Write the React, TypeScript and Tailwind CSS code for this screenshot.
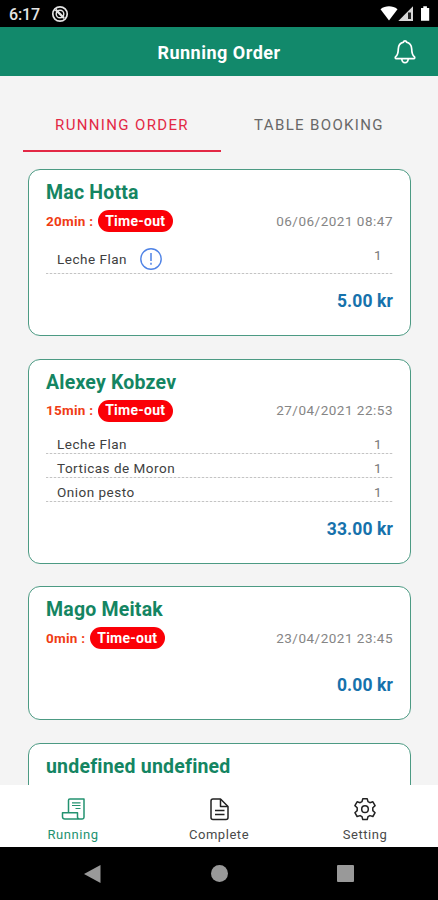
import React from "react";

type Item = { name: string; qty: number; alert?: boolean };
type Order = { name: string; wait?: string; date?: string; items: Item[]; total?: string };

const orders: Order[] = [
  {
    name: "Mac Hotta",
    wait: "20min :",
    date: "06/06/2021 08:47",
    items: [{ name: "Leche Flan", qty: 1, alert: true }],
    total: "5.00 kr",
  },
  {
    name: "Alexey Kobzev",
    wait: "15min :",
    date: "27/04/2021 22:53",
    items: [
      { name: "Leche Flan", qty: 1 },
      { name: "Torticas de Moron", qty: 1 },
      { name: "Onion pesto", qty: 1 },
    ],
    total: "33.00 kr",
  },
  { name: "Mago Meitak", wait: "0min :", date: "23/04/2021 23:45", items: [], total: "0.00 kr" },
  { name: "undefined undefined", items: [] },
];

function StatusBar() {
  return (
    <div className="flex h-[27px] shrink-0 items-center bg-black pl-[9px] pr-[8px] text-[#e4e4e4]">
      <span className="w-[42px] pt-[2px] text-[16px] font-medium leading-none tracking-[-0.100px]">6:17</span>
      <svg width="18" height="18" viewBox="0 0 18 18" fill="none" stroke="currentColor">
        <circle cx="9" cy="9" r="7.2" strokeWidth="1.7" />
        <circle cx="9" cy="9" r="3.8" strokeWidth="1.4" />
        <path d="M4.600 4.600l8.500 8.500" strokeWidth="2.200" />
      </svg>
      <div className="flex-1" />
      <svg width="50" height="17" viewBox="0 0 50 17">
        <path d="M0.500 4.200C5.500 0.400 12.500 0.400 17.500 4.200L9 15.500z" fill="#fff" />
        <path d="M33 1.300V16H18.300z" fill="#d8d8d8" />
        <path d="M28 7.500h3v6.500h-3z" fill="#222" />
        <path d="M41 3h2.300V1.200h3.600V3h2.300v12.800H41z" fill="#fff" />
      </svg>
    </div>
  );
}

function BellIcon() {
  return (
    <svg width="22" height="26" viewBox="0 0 22 26" fill="none" stroke="#fff" strokeWidth="1.700" strokeLinejoin="round">
      <path d="M11 1.800c-.9 0-1.400.6-1.400 1.300C6.300 3.900 4.400 6.400 4.300 10c-.1 4.600-.8 6.300-2.600 7.700-.8.700-.5 1.900.6 1.900h17.400c1.100 0 1.400-1.200.6-1.900-1.800-1.400-2.500-3.100-2.600-7.700-.1-3.600-2-6.100-5.300-6.900 0-.7-.5-1.300-1.400-1.300z" />
      <path d="M7.800 20c.2 2.400 1.500 3.700 3.200 3.700s3-1.300 3.200-3.700" />
    </svg>
  );
}

function OrderCard({ order }: { order: Order }) {
  return (
    <article className="min-h-[134px] shrink-0 rounded-[12px] border border-[#4c9a83] bg-white px-[17px] pb-[22px] pt-[11px]">
      <h2 className="h-[24px] text-[19.500px] font-bold leading-[24px] tracking-[0.200px] text-[#148562]">{order.name}</h2>
      {order.date && (
        <>
          <div className="mt-[5px] flex h-[22px] items-center">
            <span className="text-[13.500px] font-bold tracking-[0.250px] text-[#f03c14]">{order.wait}</span>
            <span className="ml-[4.500px] flex h-[22px] w-[75px] items-center justify-center rounded-full bg-[#fb0007] text-[14px] font-bold tracking-[0.250px] text-white">
              Time-out
            </span>
            <span className="ml-auto text-[13.500px] tracking-[0.500px] text-[#858585]">{order.date}</span>
          </div>
          <ul className="min-h-[9px] pt-[8px]">
            {order.items.map((item) => (
              <li key={item.name} className={item.alert ? "flex h-[34px] flex-col" : "flex h-[24px] flex-col"}>
                <div className="flex flex-1 items-center pl-[11px] pr-[11px] text-[13.500px] leading-[18px] tracking-[0.500px]">
                  <span className={item.alert ? "pt-[5px] text-[#404040]" : "pt-[5px] text-[#404040]"}>{item.name}</span>
                  {item.alert && (
                    <svg className="ml-[12px] mt-[5px]" width="24" height="24" viewBox="0 0 24 24" fill="none" stroke="#4f83e6">
                      <circle cx="12" cy="12" r="10.200" strokeWidth="1.400" />
                      <path d="M12 6v8M12 15.800v2" strokeWidth="1.500" />
                    </svg>
                  )}
                  <span className={item.alert ? "mb-[3px] ml-auto text-[#777]" : "ml-auto pt-[5px] text-[#777]"}>{item.qty}</span>
                </div>
                <div className="h-px shrink-0 bg-[repeating-linear-gradient(90deg,#c4c4c4_0_2px,#f0f0f0_2px_4px)]" />
              </li>
            ))}
          </ul>
          <p className="mt-[15px] h-[24px] text-right text-[17.500px] font-bold leading-[24px] tracking-[0.100px] text-[#1672ac]">{order.total}</p>
        </>
      )}
    </article>
  );
}

function RunningIcon() {
  return (
    <svg width="24" height="24" viewBox="0 0 24 24" fill="none" stroke="currentColor" strokeWidth="1.500" strokeLinejoin="round">
      <path d="M7.500 15V3.300q0-1.300 1.300-1.300H23V20.300q0 1.700-1.700 1.700H4Q1.500 22 1.500 19.700v-4h15V20q0 2 2.200 2" />
      <path d="M11 5.800h8.500M11 8.500h8.500M14.500 11.500h5" strokeWidth="1.200" />
    </svg>
  );
}

function CompleteIcon() {
  return (
    <svg width="24" height="24" viewBox="0 0 24 24" fill="none" stroke="currentColor" strokeWidth="1.500" strokeLinejoin="round">
      <path d="M13.500 2H6Q4 2 4 4V20.500q0 2 2 2h13q2 0 2-2V9.500z" />
      <path d="M13.500 2V9.500H21M8 13.500h9.500M8 17.500h9.500" />
    </svg>
  );
}

function SettingIcon() {
  return (
    <svg width="24" height="24" viewBox="0 0 24 24" fill="none" stroke="currentColor" strokeWidth="1.500" strokeLinejoin="round">
      <path d="M9.800 1.700h4.400l.8 2.900 1.900 1.100 3-.9 2.200 3.800-2.300 2.100v2.900l2.300 2.100-2.200 3.800-3-.9-1.900 1.100-.8 2.900H9.800L9 19.700l-1.900-1.100-3 .9-2.200-3.800 2.300-2.100v-2.900L1.900 8.600 4.100 4.800l3 .9L9 4.600z" />
      <circle cx="12" cy="12.150" r="3.300" />
    </svg>
  );
}

const destinations = [
  { label: "Running", Icon: RunningIcon, icon: "text-[#239270]", text: "text-[#239270]" },
  { label: "Complete", Icon: CompleteIcon, icon: "text-[#222]", text: "text-[#4a4a4a]" },
  { label: "Setting", Icon: SettingIcon, icon: "text-[#222]", text: "text-[#4a4a4a]" },
];

export default function App() {
  return (
    <div className="flex h-[900px] w-[438px] flex-col overflow-hidden bg-[#f4f4f4] font-['Roboto',sans-serif]">
      <StatusBar />
      <header className="grid h-[49px] shrink-0 grid-cols-[1fr_auto_1fr] items-center bg-[#12896b] px-[22px]">
        <h1 className="col-start-2 pt-px text-[18px] font-bold tracking-[0.500px] text-white">Running Order</h1>
        <button className="justify-self-end" aria-label="Notifications">
          <BellIcon />
        </button>
      </header>
      <nav className="mx-[23px] mt-[24px] flex h-[52px] shrink-0 text-[15px] tracking-[1.350px]">
        <button className="flex w-[198px] items-center justify-center border-b-2 border-[#e32845] text-[#e32845]">RUNNING ORDER</button>
        <button className="flex flex-1 items-center justify-center border-b-2 border-transparent pl-[2px] text-[#686868]">TABLE BOOKING</button>
      </nav>
      <main className="flex min-h-0 flex-1 flex-col gap-[22.600px] overflow-hidden pl-[28px] pr-[27px] pt-[17px]">
        {orders.map((order) => (
          <OrderCard key={order.name} order={order} />
        ))}
      </main>
      <footer className="grid h-[62px] shrink-0 grid-cols-3 bg-white text-[13px] tracking-[0.550px]">
        {destinations.map(({ label, Icon, icon, text }) => (
          <div key={label} className="flex flex-col items-center pt-[12px]">
            <span className={`flex h-[24px] ${icon}`}>
              <Icon />
            </span>
            <span className={`mt-[4px] leading-[20px] ${text}`}>{label}</span>
          </div>
        ))}
      </footer>
      <div className="flex h-[53px] shrink-0 items-center justify-between bg-black pl-[83px] pr-[84px]">
        <svg width="18" height="20" viewBox="0 0 18 20"><path d="M17.500 1v18L1 10z" fill="#999" /></svg>
        <div className="size-[17px] rounded-full bg-[#999]" />
        <div className="size-[17px] rounded-[1px] bg-[#999]" />
      </div>
    </div>
  );
}
